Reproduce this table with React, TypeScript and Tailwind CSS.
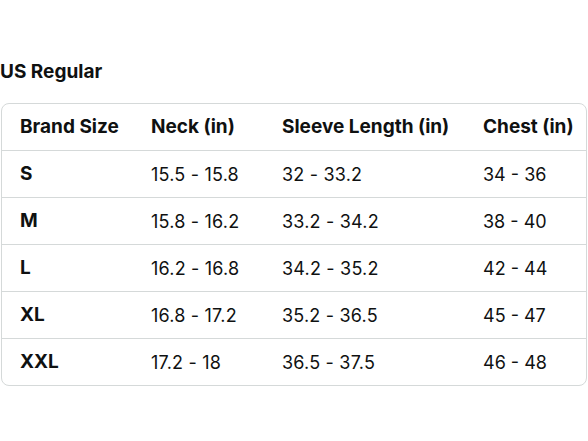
import React from 'react';

const rows = [
  { size: 'S', neck: '15.5 - 15.8', sleeve: '32 - 33.2', chest: '34 - 36' },
  { size: 'M', neck: '15.8 - 16.2', sleeve: '33.2 - 34.2', chest: '38 - 40' },
  { size: 'L', neck: '16.2 - 16.8', sleeve: '34.2 - 35.2', chest: '42 - 44' },
  { size: 'XL', neck: '16.8 - 17.2', sleeve: '35.2 - 36.5', chest: '45 - 47' },
  { size: 'XXL', neck: '17.2 - 18', sleeve: '36.5 - 37.5', chest: '46 - 48' },
];

const grid = 'grid grid-cols-[131px_131px_201px_1fr] items-center pl-[18px] text-[18px]';

export default function App() {
  return (
    <div className="w-[588px] h-[441px] bg-white text-[#0f1111] font-['Inter',sans-serif] pt-[60px]">
      <h2 className="h-[24px] leading-[24px] text-[19px] font-bold mb-[19px]">US Regular</h2>
      <div className="ml-[1px] w-[586px] border border-[#d5d9d9] rounded-[8px] overflow-hidden">
        <div className={`${grid} h-[46px] font-bold text-[19px]`}>
          <span>Brand Size</span>
          <span>Neck (in)</span>
          <span>Sleeve Length (in)</span>
          <span>Chest (in)</span>
        </div>
        {rows.map((r) => (
          <div key={r.size} className={`${grid} h-[47px] border-t border-[#d5d9d9]`}>
            <span className="font-bold text-[19px]">{r.size}</span>
            <span className="tracking-[0.2px]">{r.neck}</span>
            <span className="tracking-[0.2px]">{r.sleeve}</span>
            <span>{r.chest}</span>
          </div>
        ))}
      </div>
    </div>
  );
}
